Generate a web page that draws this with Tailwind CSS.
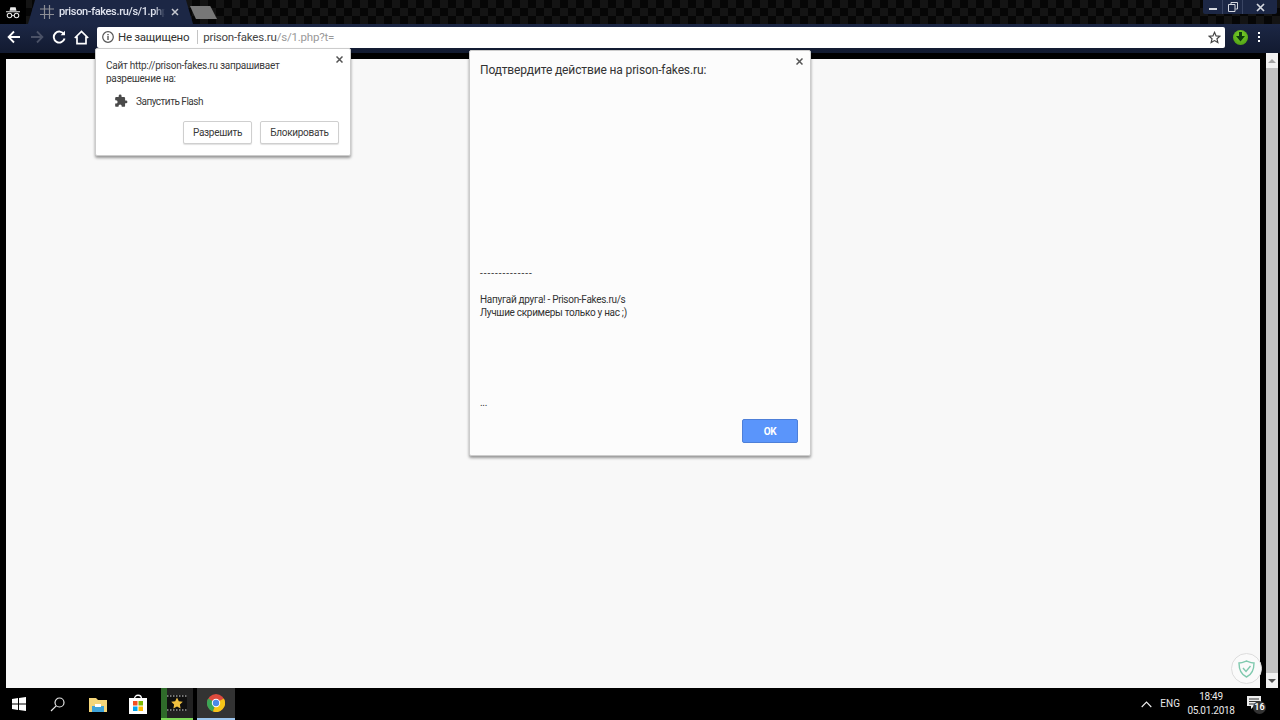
<!DOCTYPE html>
<html lang="ru"><head><meta charset="utf-8">
<script src="https://cdn.jsdelivr.net/npm/@tailwindcss/browser@4"></script>
</head>
<body class="m-0 overflow-hidden bg-black">
<div class="relative flex h-[720px] w-[1280px] flex-col overflow-hidden bg-black font-['Roboto','Noto_Sans',sans-serif] text-[#333]">

  <!-- Tab strip -->
  <header class="relative flex h-[24px] shrink-0 items-end bg-[#070707] bg-[repeating-conic-gradient(#141414_0_25%,#060606_0_50%)] bg-[length:16px_16px]">
    <div class="flex h-[24px] w-[26px] shrink-0 items-center justify-center bg-black">
      <svg width="14" height="13" viewBox="0 0 16 14" fill="none"><path d="M4 5 L5 1 H11 L12 5 Z M0 5.5 H16 V6.7 H0 Z" fill="#e8e8e8"/><circle cx="4" cy="10.5" r="2.6" stroke="#e8e8e8" stroke-width="1.2"/><circle cx="12" cy="10.5" r="2.6" stroke="#e8e8e8" stroke-width="1.2"/><path d="M6.6 10.5 H9.4" stroke="#e8e8e8"/></svg>
    </div>
    <div class="relative ml-[2px] flex h-[24px] w-[165px] shrink-0 items-center bg-[#1c2745] pl-[12px] [clip-path:polygon(0_100%,7px_0,calc(100%-7px)_0,100%_100%)]">
      <svg class="shrink-0" width="14" height="14" viewBox="0 0 14 14" fill="none" stroke="#8d8f96" stroke-width="1.2"><path d="M4.5 0 V14 M9.5 0 V14 M0 4 H14 M0 9.5 H14"/></svg>
      <span class="ml-[5px] w-[106px] overflow-hidden whitespace-nowrap text-[11px] leading-[14px] font-medium tracking-[-0.35px] text-[#dfe3ee] [mask-image:linear-gradient(90deg,black_90%,transparent)]">prison-fakes.ru/s/1.php?t=</span>
      <svg class="ml-[6px] shrink-0" width="8" height="8" viewBox="0 0 8 8" stroke="#c4c7cf" stroke-width="1.5"><path d="M1 1 L7 7 M7 1 L1 7"/></svg>
    </div>
    <div class="ml-[-3px] mb-[5px] h-[13px] w-[27px] shrink-0 bg-[#777] [clip-path:polygon(0_0,75%_0,100%_100%,22%_100%)]"></div>
    <div class="absolute right-[3px] top-0 flex h-[14px] items-stretch rounded-b-[2px] bg-[#1c2745] text-[#d5d8df]">
      <div class="flex w-[20px] items-center justify-center border-r border-[#3a4563]"><span class="mt-[3px] h-[2px] w-[8px] bg-[#d5d8df]"></span></div>
      <div class="flex w-[20px] items-center justify-center border-r border-[#3a4563]"><svg width="10" height="10" viewBox="0 0 10 10" fill="none" stroke="#d5d8df"><path d="M3 2.5 V.5 H9.5 V7 H7.5 M.5 2.5 H7 V9.5 H.5 Z"/></svg></div>
      <div class="flex w-[34px] items-center justify-center"><svg width="9" height="9" viewBox="0 0 9 9" stroke="#d5d8df" stroke-width="1.7"><path d="M1 1 L8 8 M8 1 L1 8"/></svg></div>
    </div>
  </header>

  <!-- Toolbar -->
  <nav class="flex h-[29px] shrink-0 items-center bg-gradient-to-b from-[#1c2745] to-[#121a30] pb-[3px]">
    <div class="flex w-[97px] shrink-0 items-center">
      <svg class="ml-[7px]" width="14" height="14" viewBox="0 0 14 14" fill="none" stroke="#fff" stroke-width="1.8"><path d="M13 7 H2 M7 1.5 L1.6 7 L7 12.5"/></svg>
      <svg class="ml-[9px]" width="14" height="14" viewBox="0 0 14 14" fill="none" stroke="#4a5166" stroke-width="1.8"><path d="M1 7 H12 M7 1.5 L12.4 7 L7 12.5"/></svg>
      <svg class="ml-[8px]" width="14" height="14" viewBox="0 0 14 14" fill="none" stroke="#fff" stroke-width="1.9"><path d="M12 4.2 A5.5 5.5 0 1 0 12.6 8.6"/><path d="M13 .8 V5.2 H8.6 Z" fill="#fff" stroke="none"/></svg>
      <svg class="ml-[8px]" width="15" height="15" viewBox="0 0 15 15" fill="none" stroke="#fff" stroke-width="1.7"><path d="M.8 8 L7.5 1.5 L14.2 8 M3 6.5 V13.6 H12 V6.5"/></svg>
    </div>
    <div class="flex h-[21px] w-[1128px] shrink-0 items-center rounded-[2px] bg-white pl-[5px] pr-[4px]">
      <svg class="shrink-0" width="12" height="12" viewBox="0 0 12 12" fill="none" stroke="#555"><circle cx="6" cy="6" r="5.3" stroke-width="1.2"/><path d="M6 5 V9 M6 3 V4.2" stroke-width="1.4"/></svg>
      <span class="ml-[4px] mt-[2px] whitespace-nowrap text-[11.5px] tracking-[-0.28px] text-[#333]">Не защищено</span>
      <span class="ml-[8px] h-[14px] w-px bg-[#c4c4c4]"></span>
      <span class="ml-[5px] mt-[2px] whitespace-nowrap text-[11.5px] tracking-[-0.2px]"><span class="text-[#444]">prison-fakes.ru</span><span class="text-[#999]">/s/1.php?t=</span></span>
      <svg class="ml-auto shrink-0" width="13" height="13" viewBox="0 0 24 24" fill="none" stroke="#444" stroke-width="2.2"><path d="M12 2.5 L14.9 9 L22 9.7 L16.6 14.4 L18.2 21.4 L12 17.7 L5.8 21.4 L7.4 14.4 L2 9.7 L9.1 9 Z"/></svg>
    </div>
    <div class="ml-[8px] flex h-[15px] w-[15px] shrink-0 items-center justify-center rounded-full bg-[radial-gradient(circle_at_50%_35%,#7bd02c,#46960f)]">
      <svg width="9" height="10" viewBox="0 0 9 10" fill="#0d3b0d"><path d="M3 0 H6 V4 H9 L4.5 9.5 L0 4 H3 Z"/></svg>
    </div>
    <div class="ml-[10px] flex flex-col gap-[2px]"><span class="h-[2px] w-[2px] bg-white"></span><span class="h-[2px] w-[2px] bg-white"></span><span class="h-[2px] w-[2px] bg-white"></span></div>
  </nav>

  <!-- Page area -->
  <main class="flex min-h-0 flex-1 pl-[6px]">
    <div class="mt-[6px] min-w-0 flex-1 bg-[#f8f8f8]"></div>
    <div class="ml-[6px] mr-[2px] flex w-[12px] shrink-0 flex-col items-stretch bg-[#f1f1f1]">
      <div class="flex h-[15px] items-center justify-center"><span class="h-0 w-0 border-x-[4px] border-b-[4px] border-x-transparent border-b-[#a3a3a3]"></span></div>
      <div class="flex-1 bg-[#c1c1c1]"></div>
      <div class="flex h-[15px] items-center justify-center"><span class="h-0 w-0 border-x-[4px] border-t-[4px] border-x-transparent border-t-[#505050]"></span></div>
    </div>
  </main>

  <!-- Taskbar -->
  <footer class="flex h-[32px] shrink-0 items-stretch bg-black text-white">
    <div class="flex w-[38px] items-center justify-center">
      <svg width="14" height="14" viewBox="0 0 14 14" fill="#fff"><path d="M0 2 L6 1.1 V6.6 H0 Z M7 1 L14 0 V6.6 H7 Z M0 7.4 H6 V12.9 L0 12 Z M7 7.4 H14 V14 L7 13 Z"/></svg>
    </div>
    <div class="flex w-[39px] items-center justify-center">
      <svg width="15" height="15" viewBox="0 0 15 15" fill="none" stroke="#e6e6e6" stroke-width="1.2"><circle cx="9.5" cy="5.5" r="4.5"/><path d="M6.2 8.8 L1 14"/></svg>
    </div>
    <div class="flex w-[42px] items-center justify-center">
      <svg width="18" height="15" viewBox="0 0 18 15"><path d="M0 1 H7 L9 3 H18 V15 H0 Z" fill="#f5d67a"/><path d="M3 9 H15 V15 H3 Z" fill="#3fa3d8"/><path d="M6 7 H12 V10 H6 Z" fill="#fff"/></svg>
    </div>
    <div class="flex w-[38px] items-center justify-center">
      <svg width="18" height="20" viewBox="0 0 18 20"><path d="M5.5 5 C5.5 0 12.5 0 12.5 5" fill="none" stroke="#fff" stroke-width="1.3"/><rect y="4" width="18" height="16" fill="#fff"/><rect x="4" y="7" width="4.5" height="4.5" fill="#f25022"/><rect x="9.5" y="7" width="4.5" height="4.5" fill="#7fba00"/><rect x="4" y="12.5" width="4.5" height="4.5" fill="#00a4ef"/><rect x="9.5" y="12.5" width="4.5" height="4.5" fill="#ffb900"/></svg>
    </div>
    <div class="ml-[4px] flex w-[32px] items-center justify-center border-b-2 border-[#7ed957] bg-[linear-gradient(90deg,#2f6b2a_0_6px,#222_6px)]">
      <svg width="20" height="16" viewBox="0 0 20 16"><rect width="20" height="16" fill="#101010"/><path d="M0 1 H20 M0 15 H20" stroke="#ddd" stroke-dasharray="1.5 1.5"/><path d="M10 2.5 L11.8 6.2 L15.8 6.7 L12.9 9.5 L13.6 13.5 L10 11.6 L6.4 13.5 L7.1 9.5 L4.2 6.7 L8.2 6.2 Z" fill="#f0c040"/></svg>
    </div>
    <div class="ml-[4px] flex w-[38px] items-center justify-center border-b-2 border-[#9cc6ee] bg-[#333]">
      <svg width="18" height="18" viewBox="0 0 18 18"><circle cx="9" cy="9" r="9" fill="#dd4b3e"/><path d="M9 9 L1.2 4.5 A9 9 0 0 0 6 17.5 Z" fill="#3aa655"/><path d="M9 9 L16.8 4.5 A9 9 0 0 1 6 17.5 Z" fill="#f5c518"/><circle cx="9" cy="9" r="4.2" fill="#fff"/><circle cx="9" cy="9" r="3.2" fill="#4a89e8"/></svg>
    </div>
    <div class="ml-auto flex items-center">
      <svg width="11" height="7" viewBox="0 0 11 7" fill="none" stroke="#eee" stroke-width="1.1"><path d="M.7 6 L5.5 1 L10.3 6"/></svg>
      <span class="ml-[8px] text-[10px] leading-none text-[#e8e8e8]">ENG</span>
      <div class="ml-[8px] flex w-[46px] flex-col items-center text-[10px] leading-[14px] tracking-[-0.3px] text-[#e8e8e8]"><span>18:49</span><span>05.01.2018</span></div>
      <div class="relative ml-[13px] mr-[13px] h-[20px] w-[20px]">
        <svg class="absolute left-0 top-[2px]" width="14" height="13" viewBox="0 0 14 13" fill="#eee"><path d="M0 0 H14 V10 H7 L4 13 V10 H0 Z"/><path d="M2 3 H12 M2 5.5 H12 M2 8 H12" stroke="#333"/></svg>
        <span class="absolute left-[6px] top-[7px] flex h-[13px] w-[13px] items-center justify-center rounded-full bg-[#333] text-[9px] font-semibold leading-none">16</span>
      </div>
    </div>
  </footer>

  <!-- Permission bubble -->
  <aside class="absolute left-[95px] top-[48px] h-[108px] w-[256px] rounded-[2px] border border-[#ccc] bg-white pl-[10px] pr-[11px] pt-[10px] text-[10px] leading-[13px] tracking-[-0.26px] text-[#3a3a3a] shadow-[0_2px_3px_rgba(0,0,0,0.4)]">
    <svg class="absolute right-[7px] top-[7px]" width="7" height="7" viewBox="0 0 7 7" stroke="#555" stroke-width="1.5"><path d="M.5 .5 L6.5 6.5 M6.5 .5 L.5 6.5"/></svg>
    <p class="w-[210px]">Сайт http://prison-fakes.ru запрашивает разрешение на:</p>
    <div class="mt-[9px] flex items-center pl-[8px]">
      <svg width="14" height="14" viewBox="0 0 24 24" fill="#4a4a4a"><path d="M20.5 11H19V7a2 2 0 0 0-2-2h-4V3.5a2.5 2.5 0 0 0-5 0V5H4a2 2 0 0 0-2 2v3.8h1.5a2.7 2.7 0 0 1 0 5.4H2V20a2 2 0 0 0 2 2h3.8v-1.5a2.7 2.7 0 0 1 5.4 0V22H17a2 2 0 0 0 2-2v-4h1.5a2.5 2.5 0 0 0 0-5z"/></svg>
      <span class="ml-[8px] tracking-[-0.5px]">Запустить Flash</span>
    </div>
    <div class="mt-[13px] flex justify-end gap-[8px]">
      <button class="h-[23px] w-[69px] rounded-[2px] border border-[#cfcfcf] bg-white text-[10px] tracking-[-0.3px] text-[#3a3a3a] shadow-[0_1px_1px_rgba(0,0,0,0.12)]">Разрешить</button>
      <button class="h-[23px] w-[79px] rounded-[2px] border border-[#cfcfcf] bg-white text-[10px] tracking-[-0.3px] text-[#3a3a3a] shadow-[0_1px_1px_rgba(0,0,0,0.12)]">Блокировать</button>
    </div>
  </aside>

  <!-- JS dialog -->
  <section class="absolute left-[469px] top-[50px] flex h-[406px] w-[342px] flex-col rounded-[2px] border border-[#ccc] bg-[#fcfcfc] px-[10px] text-[10px] leading-[13px] tracking-[-0.3px] text-[#333] shadow-[0_2px_3px_rgba(0,0,0,0.4)]">
    <svg class="absolute right-[7px] top-[7px]" width="7" height="7" viewBox="0 0 7 7" stroke="#555" stroke-width="1.5"><path d="M.5 .5 L6.5 6.5 M6.5 .5 L.5 6.5"/></svg>
    <h1 class="mt-[12px] text-[12px] leading-[15px] font-normal tracking-[-0.13px] text-[#333]">Подтвердите действие на prison-fakes.ru:</h1>
    <p class="mt-[189px] tracking-[1px]">--------------</p>
    <p class="mt-[13px]">Напугай друга! - Prison-Fakes.ru/s</p>
    <p>Лучшие скримеры только у нас ;)</p>
    <p class="mt-[77px]">...</p>
    <button class="absolute right-[12px] top-[368px] h-[24px] w-[56px] rounded-[2px] border border-[#4d7fd8] bg-[#5a95fb] text-[10px] font-bold text-white">OK</button>
  </section>

  <!-- Floating shield -->
  <div class="absolute left-[1231px] top-[653px] flex h-[31px] w-[31px] items-center justify-center rounded-full border border-[#ddd] bg-[#fafafa]">
    <svg width="17" height="18" viewBox="0 0 17 18" fill="none" stroke="#7fc9ae" stroke-width="1.4"><path d="M1 3 C4 3 6 2 8.5 1 C11 2 13 3 16 3 C16 10 13 15 8.5 17 C4 15 1 10 1 3 Z"/><path d="M5 8 L8 11.5 L12.5 6"/></svg>
  </div>
</div>
</body></html>
